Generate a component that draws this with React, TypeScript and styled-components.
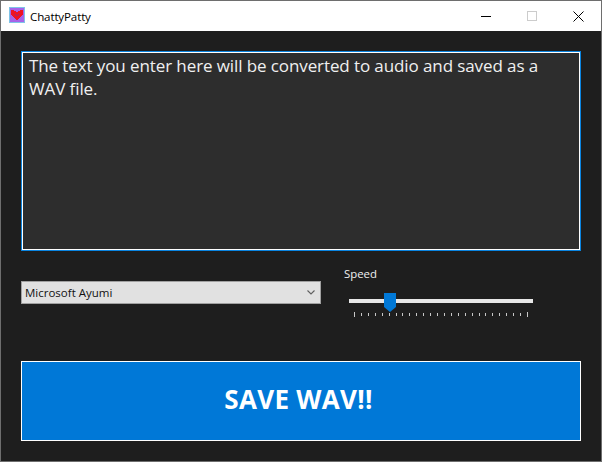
import React from "react";
import styled, { createGlobalStyle } from "styled-components";

const Global = createGlobalStyle`
  html, body { margin: 0; padding: 0; background: #1e1e1e; }
  * { box-sizing: border-box; }
`;

const Win = styled.div`
  width: 602px; height: 462px;
  border: 1px solid #6e6e6e;
  background: #1e1e1e;
  display: flex; flex-direction: column;
  font-family: "Open Sans", "Noto Sans", sans-serif;
  overflow: hidden;
`;
const TitleBar = styled.div`
  height: 30px; flex: none; background: #fff;
  display: flex; align-items: center;
  padding-left: 8px;
`;
const AppIcon = styled.svg`width: 16px; height: 16px; flex: none; display: block; margin-bottom: 2px;`;
const Title = styled.span`
  margin-left: 5px; font-size: 11.6px; color: #000; flex: 1; letter-spacing: -0.15px;
`;
const WinBtn = styled.div`
  width: 46px; height: 30px; display: flex; align-items: center; justify-content: center;
`;
const Body = styled.div`
  flex: 1; display: flex; flex-direction: column;
  padding: 20px 20px 20px 20px;
`;
const TextBox = styled.div`
  width: 560px; height: 200px; flex: none;
  background: #2d2d2d;
  border: 1px solid #0a84e0;
  box-shadow: inset 0 0 0 1px #fff;
  padding: 2px 7px;
  font-size: 17px; line-height: 23px; color: #f0f0f0; letter-spacing: -0.1px;
`;
const Controls = styled.div`
  display: flex; align-items: flex-start;
  height: 110px; flex: none; padding-top: 15px;
`;
const Combo = styled.div`
  width: 300px; height: 23px; margin-top: 15px;
  background: #e1e1e1; border: 1px solid #a0a0a0;
  display: flex; align-items: center; justify-content: space-between;
  padding: 0 4px 0 3px;
  font-size: 11.5px; color: #111;
`;
const SpeedCol = styled.div`
  margin-left: 23px; width: 190px; display: flex; flex-direction: column;
`;
const SpeedLabel = styled.div`
  font-size: 11.4px; line-height: 16px; color: #f0f0f0;
`;
const SliderArea = styled.div`
  position: relative; height: 34px; margin-top: 2px;
`;
const Track = styled.div`
  margin-left: 5px; margin-top: 15px; width: 184px; height: 4px; background: #e7e7e7;
`;
const Thumb = styled.svg`
  position: absolute; left: 40px; top: 9px; width: 12px; height: 19px;
`;
const Ticks = styled.svg`
  position: absolute; left: 0; top: 28px; width: 190px; height: 6px;
`;
const SaveButton = styled.div`
  width: 560px; height: 80px; flex: none;
  background: #0078d7; border: 1px solid #fff;
  display: flex; align-items: center; justify-content: center;
  color: #fff; font-weight: 700; font-size: 26px; letter-spacing: 0.3px;
  padding-bottom: 5px; padding-right: 5px;
`;

const tickXs = Array.from({ length: 26 }, (_, i) => 10 + i * 6.92);

export default function App() {
  return (
    <Win>
      <Global />
      <TitleBar>
        <AppIcon viewBox="0 0 16 16">
          <rect x="0.5" y="0.5" width="15" height="15" fill="#a763e8" stroke="#7fc4e8" />
          <path d="M2 3h3v1h2v1h2V4h2V3h3v5h-1v1h-1v1h-1v1h-1v1h-1v1H7v-1H6v-1H5v-1H4V9H3V8H2z" fill="#ee1122" />
          <path d="M6 7h1v1h2V7h1v1H9v1H7V8H6z" fill="#8a2a80" />
        </AppIcon>
        <Title>ChattyPatty</Title>
        <WinBtn>
          <svg width="10" height="10" viewBox="0 0 10 10"><path d="M0 5.5h10" stroke="#000" /></svg>
        </WinBtn>
        <WinBtn>
          <svg width="10" height="10" viewBox="0 0 10 10"><rect x="0.5" y="0.5" width="9" height="9" fill="none" stroke="#ccc" /></svg>
        </WinBtn>
        <WinBtn>
          <svg width="11" height="11" viewBox="0 0 11 11"><path d="M0.5 0.5l10 10M10.5 0.5l-10 10" stroke="#000" /></svg>
        </WinBtn>
      </TitleBar>
      <Body>
        <TextBox>
          The text you enter here will be converted to audio and saved as a WAV file.
        </TextBox>
        <Controls>
          <Combo>
            <span>Microsoft Ayumi</span>
            <svg width="10" height="6" viewBox="0 0 10 6"><path d="M1.5 0.5l3.5 3.5 3.5-3.5" fill="none" stroke="#606060" strokeWidth="1.1" /></svg>
          </Combo>
          <SpeedCol>
            <SpeedLabel>Speed</SpeedLabel>
            <SliderArea>
              <Track />
              <Thumb viewBox="0 0 12 19"><path d="M0 0h12v14l-6 5-6-5z" fill="#0078d7" /></Thumb>
              <Ticks viewBox="0 0 190 6">
                {tickXs.map((x, i) => (
                  <rect key={x} x={Math.round(x)} y={i === 0 || i === 25 ? 0 : 1} width="1" height={i === 0 || i === 25 ? 5 : 3} fill="#c8c8c8" />
                ))}
              </Ticks>
            </SliderArea>
          </SpeedCol>
        </Controls>
        <SaveButton>SAVE WAV!!</SaveButton>
      </Body>
    </Win>
  );
}
